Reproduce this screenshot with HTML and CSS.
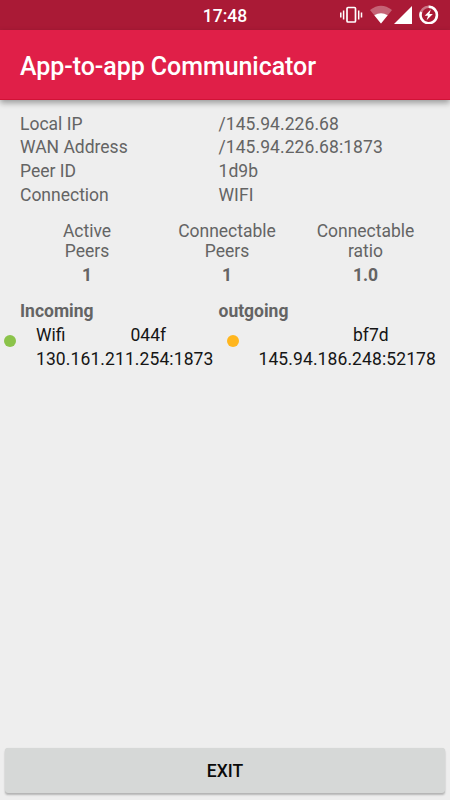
FILE: index.html
```html
<!DOCTYPE html>
<html lang="en">
<head>
<meta charset="utf-8">
<title>App-to-app Communicator</title>
<link rel="stylesheet" href="styles.css">
</head>
<body>
<div class="status">
  <time class="clock">17:48</time>
  <svg class="status-icons" width="102" height="24" viewBox="0 0 102 24">
    <g fill="none" stroke="#fff">
      <rect x="7" y="7.500" width="8.500" height="14.500" rx="1" stroke-width="1.700"/>
      <path d="M.8 12.500v5M3.600 10.500v9M18.700 10.500v9M21.500 12.500v5" stroke-width="1.500"/>
    </g>
    <path d="M30 10Q41 1.500 52 10L41 23.500Z" fill="#fff" fill-opacity=".32"/>
    <path d="M34.300 15.300Q41 11 47.700 15.300L41 23.500Z" fill="#fff"/>
    <path d="M72 6V24H54Z" fill="#fff"/>
    <circle cx="88.700" cy="15" r="8.200" fill="none" stroke="#fff" stroke-opacity=".4" stroke-width="2.500"/>
    <path d="M88.700 6.800A8.200 8.200 0 1 1 81.100 12" fill="none" stroke="#fff" stroke-width="2.500"/>
    <path d="M90.800 9.500L84.700 15.800H88L86.600 20.300L92.900 13.900H89.400Z" fill="#fff"/>
  </svg>
</div>
<header class="toolbar"><h1>App-to-app Communicator</h1></header>
<main>
  <dl class="info">
    <dt>Local IP</dt><dd>/145.94.226.68</dd>
    <dt>WAN Address</dt><dd>/145.94.226.68:1873</dd>
    <dt>Peer ID</dt><dd>1d9b</dd>
    <dt>Connection</dt><dd>WIFI</dd>
  </dl>
  <section class="stats">
    <div>Active<br>Peers<strong>1</strong></div>
    <div>Connectable<br>Peers<strong>1</strong></div>
    <div>Connectable<br>ratio<strong>1.0</strong></div>
  </section>
  <section class="peers">
    <div class="column">
      <h2>Incoming</h2>
      <div class="peer">
        <i class="dot green"></i>
        <div class="peer-text">
          <div class="names"><span>Wifi</span><span>044f</span></div>
          <div class="address">130.161.211.254:1873</div>
        </div>
      </div>
    </div>
    <div class="column">
      <h2>outgoing</h2>
      <div class="peer">
        <i class="dot amber"></i>
        <div class="peer-text">
          <div class="names"><span></span><span>bf7d</span></div>
          <div class="address">145.94.186.248:52178</div>
        </div>
      </div>
    </div>
  </section>
</main>
<button class="exit">EXIT</button>
</body>
</html>
```
FILE: styles.css
```css
* { box-sizing: border-box; }
body {
  margin: 0;
  height: 800px;
  display: flex;
  flex-direction: column;
  overflow: hidden;
  background: #eee;
  color: #646464;
  font: 17.5px/24px Roboto, sans-serif;
}
.status {
  height: 30px;
  display: grid;
  grid-template-columns: 1fr auto 1fr;
  background: #aa1a36;
  color: #fff;
}
.clock {
  grid-column: 2;
  font-weight: 500;
  line-height: 32px;
}
.status-icons {
  justify-self: end;
  margin-right: 8px;
}
.toolbar {
  height: 70px;
  padding-left: 20px;
  background: #e01f48;
  border-bottom: 1px solid #d11236;
  box-shadow: 0 3px 6px rgba(0, 0, 0, .35);
}
h1 {
  margin: 0;
  color: #fff;
  font-size: 25px;
  font-weight: 500;
  letter-spacing: -.06px;
  line-height: 74px;
}
main { flex: 1; }
.info {
  display: grid;
  grid-template-columns: 198.500px 1fr;
  grid-auto-rows: 23.800px;
  margin: 11.500px 0 0 20px;
}
.info dd {
  margin: 0;
  letter-spacing: .07px;
}
.stats {
  display: grid;
  grid-template-columns: 134px 146px 131px;
  margin: 14px 0 0 20px;
  text-align: center;
  line-height: 20.500px;
}
.stats strong {
  display: block;
  margin-top: 3px;
}
.peers {
  display: grid;
  grid-template-columns: 222.500px 1fr;
  margin-top: 14px;
}
h2 {
  margin: 0 0 0 20px;
  font-size: 17.5px;
  font-weight: 700;
}
.column + .column h2 { margin-left: -4px; }
.peer {
  display: flex;
  padding-left: 4px;
  color: #151515;
}
.dot {
  width: 12px;
  height: 12px;
  margin: 12px 20px 0 0;
  border-radius: 50%;
}
.green { background: #8bc34a; }
.amber { background: #ffb61e; }
.names {
  display: grid;
  grid-template-columns: 94.500px 1fr;
}
.address { letter-spacing: .1px; }
.exit {
  height: 45px;
  margin: 0 5px 7px;
  border: 0;
  border-radius: 3px;
  background: #d6d8d7;
  box-shadow: 0 2px 2px rgba(0, 0, 0, .24), 0 0 1px rgba(0, 0, 0, .12);
  color: #0a0a0a;
  font: 500 17.5px Roboto, sans-serif;
}
```
